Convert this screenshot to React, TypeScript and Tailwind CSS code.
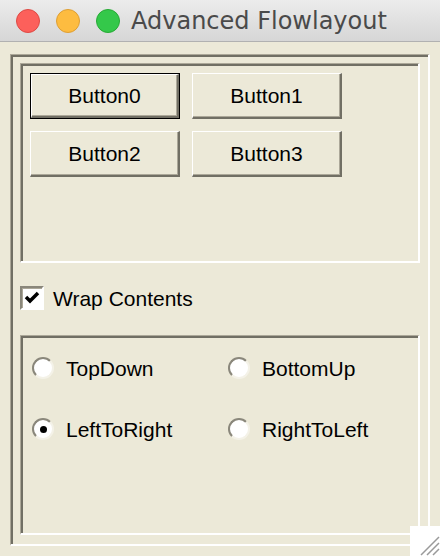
import React from "react";

const BODY_FONT = { fontFamily: '"Liberation Sans", Arial, sans-serif' };

function XpButton({ label, focused }: { label: string; focused?: boolean }) {
  const btn = (
    <button
      className={`${focused ? "w-[148px] h-[44px]" : "w-[150px] h-[46px]"} bg-[#ece9d8] border-t border-l border-white border-r-2 border-b-2 border-r-[#716f64] border-b-[#716f64] shadow-[inset_-1px_-1px_0_#aca899] text-[21px] text-black flex items-center justify-center`}
    >
      {label}
    </button>
  );
  if (!focused) return btn;
  return <div className="border border-black">{btn}</div>;
}

function Radio({ label, checked }: { label: string; checked?: boolean }) {
  return (
    <div className="flex items-center gap-[12px] h-[22px]">
      <div className="w-[22px] h-[22px] rounded-full bg-white border-2 border-t-[#8a877b] border-l-[#8a877b] border-r-[#f4f2e8] border-b-[#f4f2e8] flex items-center justify-center">
        {checked && <div className="w-[7px] h-[7px] rounded-full bg-black" />}
      </div>
      <span className="text-[21px] text-black leading-none">{label}</span>
    </div>
  );
}

export default function App() {
  return (
    <div className="w-[440px] h-[556px] bg-[#ece9d8] flex flex-col relative overflow-hidden" style={BODY_FONT}>
      {/* title bar */}
      <div className="h-[42px] shrink-0 flex items-center bg-gradient-to-b from-[#ececec] to-[#d6d6d6] border-b border-[#b1b1b1]">
        <div className="flex items-center gap-[16px] ml-[16px]">
          <div className="w-[24px] h-[24px] rounded-full bg-[#fc605b] border border-[#de4a44]" />
          <div className="w-[24px] h-[24px] rounded-full bg-[#fdbc40] border border-[#de9f34]" />
          <div className="w-[24px] h-[24px] rounded-full bg-[#34c84a] border border-[#27aa35]" />
        </div>
        <span className="ml-[11px] text-[24px] text-[#4a4a4a]" style={{ fontFamily: '"DejaVu Sans", sans-serif' }}>
          Advanced Flowlayout
        </span>
      </div>

      {/* outer frame */}
      <div className="mt-[12px] mx-[10px] h-[492px] border-t border-l border-[#aca899] border-r-2 border-b-2 border-r-white border-b-white">
        <div className="h-full border-t-2 border-l-2 border-[#716f64] pt-[6px] pl-[7px] pr-[8px] flex flex-col">
          {/* button panel */}
          <div className="h-[200px] border-t border-l border-[#aca899] border-r-2 border-b-2 border-r-white border-b-white">
            <div className="h-full border-t-2 border-l-2 border-[#716f64] pt-[7px] pl-[7px] flex flex-wrap content-start gap-[12px]">
              <XpButton label="Button0" focused />
              <XpButton label="Button1" />
              <XpButton label="Button2" />
              <XpButton label="Button3" />
            </div>
          </div>

          {/* checkbox */}
          <div className="mt-[23px] flex items-center gap-[9px]">
            <div className="w-[24px] h-[24px] bg-white border-2 border-t-[#8a877b] border-l-[#8a877b] border-r-white border-b-white shadow-[inset_1px_1px_0_#aca899] flex items-center justify-center">
              <svg width="16" height="14" viewBox="0 0 16 14">
                <path d="M2 6 L6 10 L14 2" fill="none" stroke="#000" strokeWidth="3.5" />
              </svg>
            </div>
            <span className="text-[21px] text-black leading-none">Wrap Contents</span>
          </div>

          {/* radio panel */}
          <div className="mt-[25px] h-[200px] border-t border-l border-[#aca899] border-r-2 border-b-2 border-r-white border-b-white">
            <div className="h-full border-t-2 border-l-2 border-[#716f64] pt-[19px] pl-[9px] grid grid-cols-[196px_1fr] gap-y-[39px] content-start">
              <Radio label="TopDown" />
              <Radio label="BottomUp" />
              <Radio label="LeftToRight" checked />
              <Radio label="RightToLeft" />
            </div>
          </div>
        </div>
      </div>

      {/* resize grip */}
      <div className="absolute right-0 bottom-0 w-[30px] h-[30px] bg-white">
        <svg width="30" height="30" viewBox="0 0 30 30">
          <path d="M29 11 L11 29 M29 17 L17 29 M29 23 L23 29" stroke="#9a9a9a" strokeWidth="1.5" />
        </svg>
      </div>
    </div>
  );
}
